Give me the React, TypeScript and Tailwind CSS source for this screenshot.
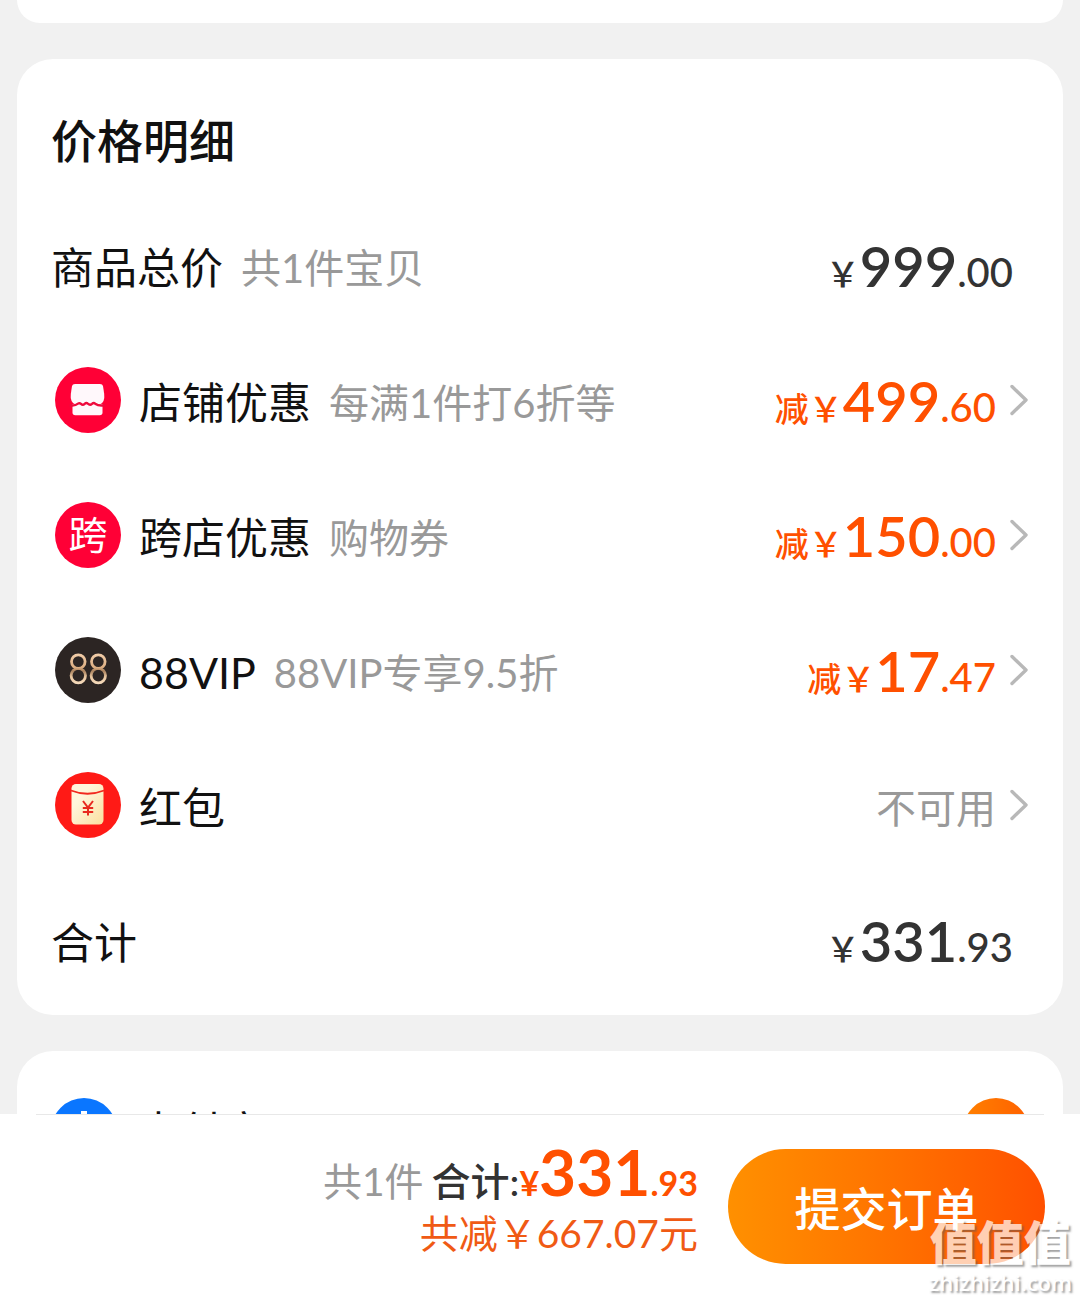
import React from 'react';
import { clsx } from 'clsx';

// full-width yen sign, takes a whole character cell
const YEN = '\uffe5';

interface PriceProps {
  integer: string;
  decimal: string;
  minus?: boolean;
}

const Price: React.FC<PriceProps> = ({ integer, decimal, minus }) => (
  <span
    className={clsx(
      'flex items-baseline pt-1 font-medium whitespace-nowrap',
      minus ? 'text-[#ff5000]' : 'text-[#333333]'
    )}
  >
    {minus && <span className="text-[34px]">减</span>}
    <span className="text-[34px]">{YEN}</span>
    <span className="text-[56px] font-semibold">{integer}</span>
    <span className="text-[40px]">.{decimal}</span>
  </span>
);

const Chevron = () => (
  <svg width="18" height="32" viewBox="0 0 18 32" fill="none" className="shrink-0">
    <path d="M2 2.5 L16 16 L2 29.5" stroke="#b8b8b8" strokeWidth="3.4" strokeLinecap="round" strokeLinejoin="round" />
  </svg>
);

const ShopIcon = () => (
  <svg width="66" height="66" viewBox="0 0 66 66" fill="none">
    <circle cx="33" cy="33" r="33" fill="#ff0036" />
    <path
      d="M20 17h25q2.500 0 3 2l1.200 8q.8 8-4 10.300H20q-5-2.300-4.200-10.300l1.200-8q.5-2 3-2z"
      fill="#fff8fb"
    />
    <path d="M17.500 37h30v8.500q0 2.800-2.800 2.800H20.300q-2.800 0-2.800-2.800z" fill="#fff8fb" />
    <path
      d="M14.500 38.200q5.500 1 8.500-1.500q1.500-1.200 3 .2q1.800 1.800 3.600 0q1.800-1.600 3.200-.2q2.200 2 4.200.2q1.600-1.600 3.200-.2q3.300 2.500 9.800 1.500"
      stroke="#ee0a3c"
      strokeWidth="2.400"
    />
  </svg>
);

const CrossShopIcon = () => (
  <span className="flex size-[66px] items-center justify-center rounded-full bg-[#ff0036] text-[39px] leading-none text-white">
    跨
  </span>
);

const VipIcon = () => (
  <svg width="66" height="66" viewBox="0 0 66 66" fill="none">
    <defs>
      <linearGradient id="gold" gradientUnits="userSpaceOnUse" x1="0" y1="16" x2="0" y2="48">
        <stop offset="0" stopColor="#f3cfab" />
        <stop offset="0.45" stopColor="#dcae82" />
        <stop offset="0.56" stopColor="#a8805c" />
        <stop offset="0.75" stopColor="#e8c6a0" />
        <stop offset="1" stopColor="#f8dfc2" />
      </linearGradient>
    </defs>
    <circle cx="33" cy="33" r="33" fill="#2c2523" />
    <g stroke="url(#gold)" strokeWidth="2.800">
      <circle cx="23.300" cy="24.600" r="6.800" />
      <circle cx="23.300" cy="38.600" r="7.200" />
      <circle cx="43.300" cy="24.600" r="6.800" />
      <circle cx="43.300" cy="38.600" r="7.200" />
    </g>
  </svg>
);

const RedPacketIcon = () => (
  <svg width="66" height="66" viewBox="0 0 66 66" fill="none">
    <defs>
      <linearGradient id="packet" x1="0" y1="0" x2="1" y2="1">
        <stop offset="0.3" stopColor="#fff6dc" />
        <stop offset="1" stopColor="#fbdf9f" />
      </linearGradient>
    </defs>
    <circle cx="33" cy="33" r="33" fill="#ff1a16" />
    <rect x="16.500" y="12" width="32" height="40.500" rx="4.500" fill="url(#packet)" />
    <path d="M16 18.500q16.500 6.500 33 0" stroke="#f2291f" strokeWidth="1.800" />
    <path d="M28 29l5 6.500 5-6.500M33 35.500v8M27.800 36h10.400M27.800 40h10.400" stroke="#e8291f" strokeWidth="2" />
  </svg>
);

const AlipayIcon = () => (
  <svg width="66" height="66" viewBox="0 0 66 66">
    <circle cx="33" cy="33" r="33" fill="#0a76ff" />
    <path d="M30 13h6v7h15v4H36v6h13q-2 7-6 12l12 5-2 5-15-7q-6 7-14 7-10 0-10-8t10-8q6 0 12 3 3-3 4-6H17v-3h13v-6H15v-4h15z" fill="#fff" />
  </svg>
);

const discounts = [
  { id: 'shop', icon: ShopIcon, label: '店铺优惠', note: '每满1件打6折等', price: ['499', '60'] },
  { id: 'cross', icon: CrossShopIcon, label: '跨店优惠', note: '购物券', price: ['150', '00'] },
  { id: 'vip', icon: VipIcon, label: '88VIP', note: '88VIP专享9.5折', price: ['17', '47'] },
  { id: 'packet', icon: RedPacketIcon, label: '红包', note: '', price: null },
];

const App: React.FC = () => (
  <div className="relative flex h-screen flex-col bg-[#f1f1f1] font-['Lato','Noto_Sans_CJK_SC',sans-serif] text-[43px] leading-[60px] text-[#111111]">
    <main className="flex min-h-0 flex-1 flex-col gap-9 overflow-hidden px-[17px]">
      <section className="h-[23px] shrink-0 rounded-b-[36px] bg-white" />

      <section className="shrink-0 rounded-[36px] bg-white pt-[52px] pb-2 pl-[34px]">
        <h2 className="mb-[26px] text-[46px] font-medium">价格明细</h2>

        <div className="flex h-[135px] items-center justify-between pt-[6px] pr-[50px]">
          <div className="flex items-center gap-[18px]">
            <span>商品总价</span>
            <span className="text-[40px] text-[#999999]">共1件宝贝</span>
          </div>
          <Price integer="999" decimal="00" />
        </div>

        {discounts.map(({ id, icon: Icon, label, note, price }) => (
          <button key={id} type="button" className="flex h-[135px] w-full items-center pr-[35px] pl-1 text-left">
            <Icon />
            <span className="flex flex-1 items-center pt-[6px] pr-[14px] pl-[18px]">
              <span>{label}</span>
              <span className="ml-[18px] text-[40px] text-[#999999]">{note}</span>
              <span className="ml-auto">
                {price ? (
                  <Price integer={price[0]} decimal={price[1]} minus />
                ) : (
                  <span className="text-[40px] text-[#999999]">不可用</span>
                )}
              </span>
            </span>
            <Chevron />
          </button>
        ))}

        <div className="flex h-[135px] items-center justify-between pt-[6px] pr-[50px]">
          <span>合计</span>
          <Price integer="331" decimal="93" />
        </div>
      </section>

      <section className="shrink-0 rounded-t-[36px] bg-white pt-[47px] pr-[34px] pl-[34px]">
        <div className="flex items-center">
          <AlipayIcon />
          <span className="ml-[20px] pt-[2px]">支付宝</span>
          <span className="ml-auto size-[66px] rounded-full bg-linear-to-r from-[#ff8000] to-[#ff6000]" />
        </div>
      </section>
    </main>

    <footer className="shrink-0 bg-white">
      <div className="mx-9 h-px bg-[#e8e8e8]" />
      <div className="flex h-[185px] items-start justify-end gap-[30px] pt-[34px] pr-[35px]">
        <div className="flex flex-col items-end whitespace-nowrap">
          <div className="flex h-[56px] items-baseline text-[39px] leading-[46px]">
            <span className="mr-[8px] text-[#999999]">共1件</span>
            <span className="font-medium text-[#333333]">合计:</span>
            <span className="flex items-baseline font-bold text-[#ff5000]">
              <span className="text-[34px]">¥</span>
              <span className="text-[64px]">331</span>
              <span className="text-[34px]">.93</span>
            </span>
          </div>
          <div className="text-[39px] leading-[56px] text-[#f05a14]">共减{YEN}667.07元</div>
        </div>
        <button
          type="button"
          className="h-[115px] w-[317px] shrink-0 rounded-full bg-linear-to-r from-[#ff9000] to-[#ff5000] pt-1 text-[46px] font-medium text-white"
        >
          提交订单
        </button>
      </div>
    </footer>

    <div className="pointer-events-none absolute right-[8px] bottom-[6px] flex flex-col items-center text-white opacity-70 [text-shadow:2px_2px_2px_rgba(90,90,90,0.8)]">
      <span className="text-[47px] leading-[56px] font-black">值值值</span>
      <span className="font-['Open_Sans',sans-serif] text-[22px] leading-[24px] font-semibold">zhizhizhi.com</span>
    </div>
  </div>
);

export default App;
